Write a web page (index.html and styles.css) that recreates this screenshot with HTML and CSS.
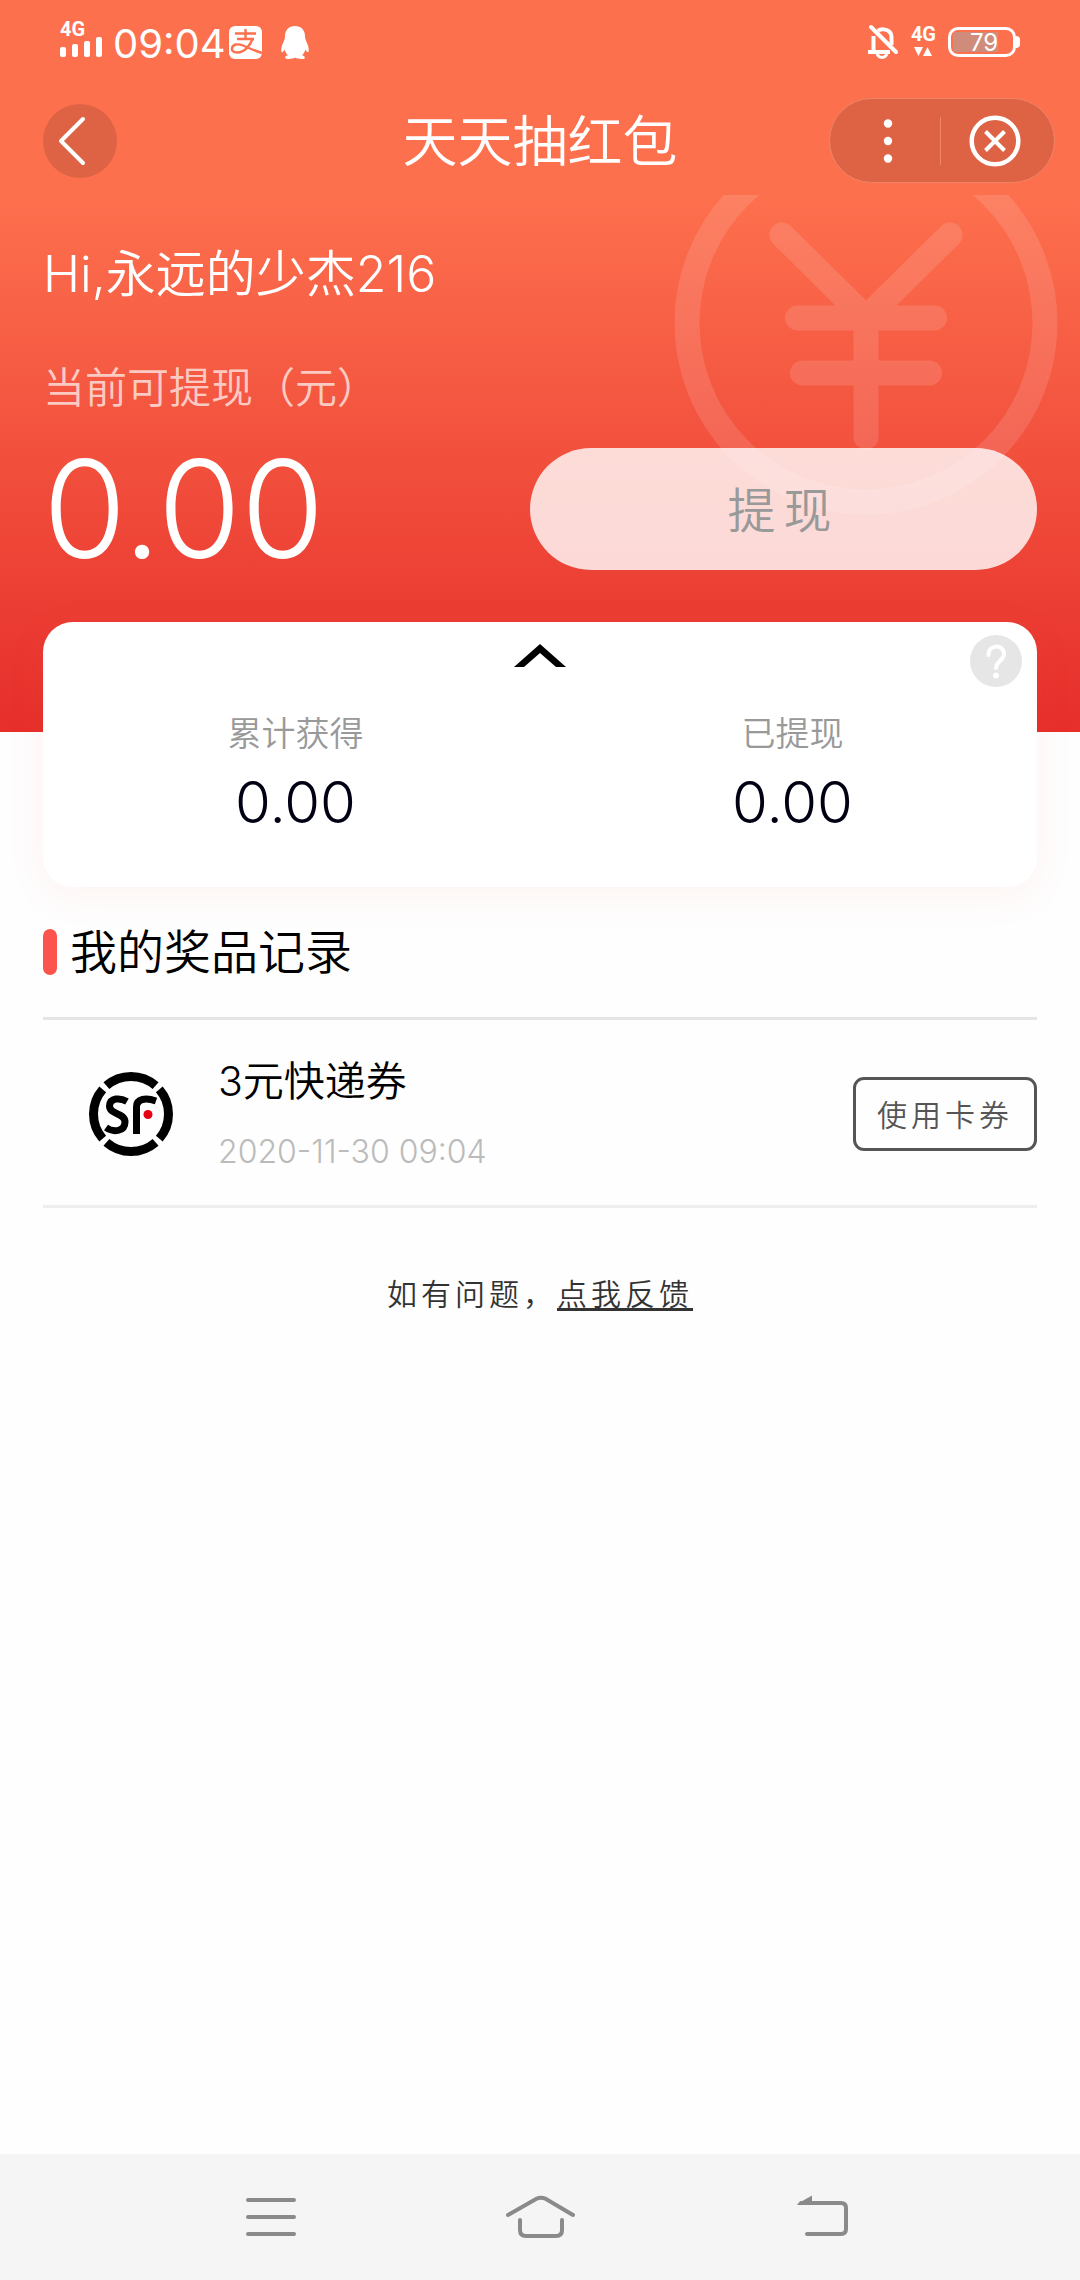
FILE: index.html
```html
<!DOCTYPE html>
<html lang="zh-CN">
<head>
<meta charset="utf-8">
<meta name="viewport" content="width=device-width, initial-scale=1">
<title>天天抽红包</title>
<link rel="stylesheet" href="styles.css">
</head>
<body>
<div class="page">
  <header class="top">
    <div class="status">
      <div class="status-group">
        <div class="signal">
          <span class="net">4G</span>
          <svg width="42" height="20" viewBox="0 0 42 20" fill="#fff" aria-hidden="true">
            <rect x="0" y="10" width="6" height="10" rx="2"/><rect x="12" y="7" width="6" height="13" rx="2"/><rect x="24" y="4" width="6" height="16" rx="2"/><rect x="36" y="0" width="6" height="20" rx="2"/>
          </svg>
        </div>
        <span class="clock">09:04</span>
        <svg class="pay" width="33" height="33" viewBox="0 0 33 33" aria-hidden="true">
          <rect width="33" height="33" rx="6" fill="#fff"/>
          <g fill="none" stroke="#fd704e" stroke-width="2.4">
            <path d="M6 7.500H27M16.500 3V13M8 13H25"/>
            <path d="M23.500 13C21 20 15 26.500 8.500 26.500C4 26.500 2.500 24.500 3 22C4 18 9 17.500 14 19.500C20 22 26 24.800 33 27"/>
          </g>
        </svg>
        <svg class="qq" width="28" height="33" viewBox="0 0 28 33" fill="#fff" aria-hidden="true">
          <path d="M14 0C8 0 4 4 4 10C4 12 3.500 13.500 2.500 16C1 19 0 22 .300 25C.600 27 2 26.500 3.600 23.500C4.200 26 5.500 28 7 29.300C4.500 30 4 31 4.300 32.200C4.600 33.300 12 33.200 14 31.500C16 33.200 23.400 33.300 23.700 32.200C24 31 23.500 30 21 29.300C22.500 28 23.800 26 24.400 23.500C26 26.500 27.400 27 27.700 25C28 22 27 19 25.500 16C24.500 13.500 24 12 24 10C24 4 20 0 14 0Z"/>
        </svg>
      </div>
      <div class="status-group">
        <svg width="31" height="34" viewBox="0 0 31 34" fill="none" stroke="#fff" stroke-width="4" aria-hidden="true">
          <path d="M10 6C12 4 19 3 22.500 8C24 10.500 23.500 14 23.500 20M5.500 11V26M0 27H22"/>
          <path d="M9 29C11 33.500 17 33.500 19 29" stroke-width="3"/>
          <path d="M3 2L28 27" stroke-linecap="round"/>
        </svg>
        <div class="data">
          <span class="net">4G</span>
          <svg width="18" height="9" viewBox="0 0 18 9" fill="#fff" aria-hidden="true"><path d="M0 0H9L4.500 9ZM9 9H18L13.500 0Z"/></svg>
        </div>
        <div class="battery"><span class="battery-body">79</span><span class="battery-cap"></span></div>
      </div>
    </div>
    <div class="titlebar">
      <button class="back" type="button" aria-label="返回">
        <svg width="74" height="74" viewBox="0 0 74 74" fill="none" stroke="#fff" stroke-width="4" stroke-linecap="round" stroke-linejoin="round"><path d="M40 15L18 37L40 59"/></svg>
      </button>
      <h1 class="title">天天抽红包</h1>
      <div class="capsule">
        <button class="more" type="button" aria-label="更多">
          <svg width="10" height="46" viewBox="0 0 10 46" fill="#fff"><circle cx="5" cy="5.500" r="4.200"/><circle cx="5" cy="23" r="4.200"/><circle cx="5" cy="40.500" r="4.200"/></svg>
        </button>
        <button class="close" type="button" aria-label="关闭">
          <svg width="48" height="48" viewBox="2 2 48 48" fill="none" stroke="#fff" stroke-width="4.500"><circle cx="26" cy="26" r="23.300"/><path d="M16.500 16.500L35.500 35.500M35.500 16.500L16.500 35.500" stroke-width="4"/></svg>
        </button>
      </div>
    </div>
  </header>

  <section class="hero">
    <svg class="mark" width="384" height="320" viewBox="0 0 384 320" fill="none" stroke="#fff" stroke-width="25" stroke-linecap="round" aria-hidden="true">
      <circle cx="192" cy="128" r="179"/>
      <path d="M108 40L192 123L276 40M123.500 123H260.500M128.500 178H255.500M192 123V242" stroke-linejoin="round"/>
    </svg>
    <p class="hello">Hi,永远的少杰216</p>
    <p class="hero-label">当前可提现（元）</p>
    <div class="hero-row">
      <strong class="amount">0.00</strong>
      <button class="withdraw" type="button">提现</button>
    </div>
  </section>

  <main class="main">
    <section class="card">
      <div class="card-head">
        <button class="fold" type="button" aria-label="收起">
          <svg width="52" height="23" viewBox="0 0 52 23"><path d="M0 23L26 0L52 23H42L26 9L10 23Z"/></svg>
        </button>
        <button class="help" type="button" aria-label="帮助">
          <svg width="52" height="52" viewBox="0 0 52 52" fill="none" stroke="#fff" stroke-width="4" stroke-linecap="round"><circle cx="26" cy="26" r="26" fill="#e6e6e6" stroke="none"/><path d="M18.500 20C18.500 9 34 9 34 19C34 25.500 26 26 26 33"/><circle cx="26" cy="40.500" r="3" fill="#fff" stroke="none"/></svg>
        </button>
      </div>
      <dl class="stats">
        <div class="stat"><dt>累计获得</dt><dd>0.00</dd></div>
        <div class="stat"><dt>已提现</dt><dd>0.00</dd></div>
      </dl>
    </section>

    <h2 class="section-title">我的奖品记录</h2>
    <ul class="records">
      <li class="record">
        <svg class="logo" width="84" height="84" viewBox="0 0 84 84" fill="none" stroke="#000" role="img" aria-label="SF">
          <g stroke-width="9">
            <path d="M17.400 13.700A37.500 37.500 0 0 1 66.600 13.700"/>
            <path d="M17.400 70.300A37.500 37.500 0 0 0 66.600 70.300"/>
            <path d="M13.700 17.400A37.500 37.500 0 0 0 13.700 66.600"/>
            <path d="M70.300 17.400A37.500 37.500 0 0 1 70.300 66.600"/>
          </g>
          <path d="M38 29.500C31 25.500 21 25.500 20.500 34C20.500 43 36 40.500 36 50C36 60 24 60.500 17 55.500" stroke-width="7"/>
          <path d="M47.500 62V35C47.500 26.500 57 25.500 67 29" stroke-width="7"/>
          <circle cx="59" cy="42.500" r="4.500" fill="#e60012" stroke="none"/>
        </svg>
        <div class="record-text">
          <h3>3元快递券</h3>
          <time datetime="2020-11-30T09:04">2020-11-30 09:04</time>
        </div>
        <button class="use" type="button">使用卡券</button>
      </li>
    </ul>
    <p class="feedback">如有问题，<a href="#feedback">点我反馈</a></p>
  </main>

  <nav class="sysnav">
    <button type="button" aria-label="菜单">
      <svg width="70" height="44" viewBox="0 0 70 44" fill="none" stroke="#8a8a8a" stroke-width="4" stroke-linecap="round"><path d="M13 5H59M13 22H59M13 39H59"/></svg>
    </button>
    <button type="button" aria-label="主页">
      <svg width="70" height="44" viewBox="0 0 70 44" fill="none" stroke="#8a8a8a" stroke-width="4" stroke-linecap="round"><path d="M3 20L31 4Q36 1.500 41 4L68 20M15 25V35Q15 41 21 41H51Q57 41 57 35V25"/></svg>
    </button>
    <button class="nav-back" type="button" aria-label="返回">
      <svg width="70" height="44" viewBox="0 0 70 44" fill="none" stroke="#8a8a8a" stroke-width="4" stroke-linecap="round"><path d="M12 8H52Q57 8 57 13V34Q57 39 52 39H18"/><path d="M8 9L23 .500V10H9Z" fill="#8a8a8a" stroke="none"/></svg>
    </button>
  </nav>
</div>
</body>
</html>
```

FILE: styles.css
```css
* { box-sizing: border-box; margin: 0; padding: 0; }

body {
  background: #fefefe;
  color: #000;
  font-family: Inter, "Noto Sans CJK SC", sans-serif;
  font-weight: 350;
}

button { border: 0; background: none; font: inherit; color: inherit; cursor: pointer; }
svg { display: block; overflow: visible; }
ul { list-style: none; }

.page { display: flex; flex-direction: column; min-height: 100vh; }

.top { background: #fd704e; color: #fff; padding-bottom: 12px; }

.status { display: flex; justify-content: space-between; height: 98px; padding: 22px 60px 0; }
.status-group { display: flex; align-items: flex-start; height: 40px; }
.net { display: block; font: 700 20px/15px Roboto, sans-serif; }
.clock { margin-left: 11px; font-size: 40px; line-height: 44px; font-weight: 400; }
.pay { margin: 4px 19px 0 3px; }
.qq { margin-top: 4px; }
.status-group > svg:first-child { margin-top: 3px; }
.data { display: grid; justify-items: center; gap: 5px; margin: 5px 12px 0; }
.battery { display: flex; align-items: center; margin-top: 5px; }
.battery-body {
  width: 68px;
  height: 30px;
  border: 3px solid #fff;
  border-radius: 10px;
  padding-left: 4px;
  background: linear-gradient(90deg, #cf8c7b 45px, transparent 45px) 2px 2px / 58px 20px no-repeat;
  font-size: 24px;
  line-height: 25px;
  font-weight: 400;
  text-align: center;
}
.battery-cap { width: 4px; height: 12px; background: #fff; border-radius: 0 4px 4px 0; }

.titlebar { display: grid; grid-template-columns: 1fr auto 1fr; align-items: center; padding: 0 25px 0 43px; }
.back { justify-self: start; width: 74px; height: 74px; border-radius: 50%; background: #dd6344; }
.title { font-size: 55px; line-height: 84px; font-weight: 350; padding-right: 18px; }
.capsule {
  justify-self: end;
  display: flex;
  align-items: center;
  width: 226px;
  height: 85px;
  padding: 0 5px 0 6px;
  border: 1px solid #ee8567;
  border-radius: 43px;
  background: #dd6344;
}
.capsule button { display: grid; place-items: center; height: 48px; }
.more { flex: 0 0 104px; }
.close { flex: 1; border-left: 1px solid #ee8567; }

.hero {
  position: relative;
  overflow: hidden;
  padding: 49px 43px 162px;
  background: linear-gradient(#fd704e, #e62e2b);
  color: #fff;
}
.mark { position: absolute; top: 0; right: 22px; opacity: .12; }
.hello { font-size: 50px; line-height: 60px; }
.hero-label { margin-top: 59px; font-size: 42px; line-height: 50px; color: rgba(255, 255, 255, .7); }
.hero-row { position: relative; display: flex; justify-content: space-between; align-items: center; margin-top: 35px; }
.amount { font-size: 135px; line-height: 122px; font-weight: 300; }
.withdraw {
  flex: 0 0 51%;
  height: 122px;
  padding-bottom: 4px;
  border-radius: 61px;
  background: rgba(255, 255, 255, .8);
  color: #999;
  font-size: 48px;
  letter-spacing: 8px;
}

.main { flex: 1; padding: 0 43px; }

.card {
  position: relative;
  margin-top: -110px;
  padding: 13px 0 50px;
  border-radius: 30px;
  background: #fff;
  box-shadow: 0 8px 40px rgba(250, 84, 76, .07);
}
.card-head { display: grid; grid-template-columns: 1fr auto 1fr; align-items: start; padding: 0 15px; }
.fold { grid-column: 2; padding-top: 9px; }
.help { justify-self: end; }
.stats { display: grid; grid-template-columns: 1fr 1fr; margin-top: 22px; text-align: center; }
.stat { padding-left: 8px; }
.stat dt { font-size: 34px; line-height: 50px; color: #999; }
.stat dd { margin-top: 8px; font-size: 58px; line-height: 70px; font-weight: 300; color: #000014; }

.section-title {
  display: flex;
  gap: 13px;
  margin-top: 42px;
  font-size: 47px;
  line-height: 46px;
  font-weight: 350;
}
.section-title::before { content: ""; width: 14px; height: 46px; border-radius: 7px; background: #fa544c; }

.records { margin-top: 42px; border-top: 3px solid #e5e5e5; }
.record { display: flex; align-items: center; gap: 45px; padding: 36px 0 33px 46px; border-bottom: 3px solid #eee; }
.record-text { flex: 1; }
.record h3 { font-size: 41px; line-height: 50px; font-weight: 350; }
.record time { display: block; margin-top: 26px; font-size: 32px; line-height: 40px; font-weight: 300; color: #bbb; }
.use {
  width: 184px;
  height: 74px;
  padding-bottom: 2px;
  border: 3px solid #555;
  border-radius: 11px;
  color: #555;
  font-size: 30px;
  letter-spacing: 4px;
}

.feedback { margin-top: 61px; font-size: 30px; line-height: 50px; letter-spacing: 4px; text-align: center; color: #333; }
.feedback a { color: inherit; text-decoration: underline; text-decoration-thickness: 3px; text-underline-offset: 3px; text-decoration-skip-ink: none; }

.sysnav { display: flex; justify-content: center; align-items: center; gap: 200px; height: 126px; padding-left: 14px; background: #f5f5f5; }
.nav-back { padding-left: 14px; }
```
